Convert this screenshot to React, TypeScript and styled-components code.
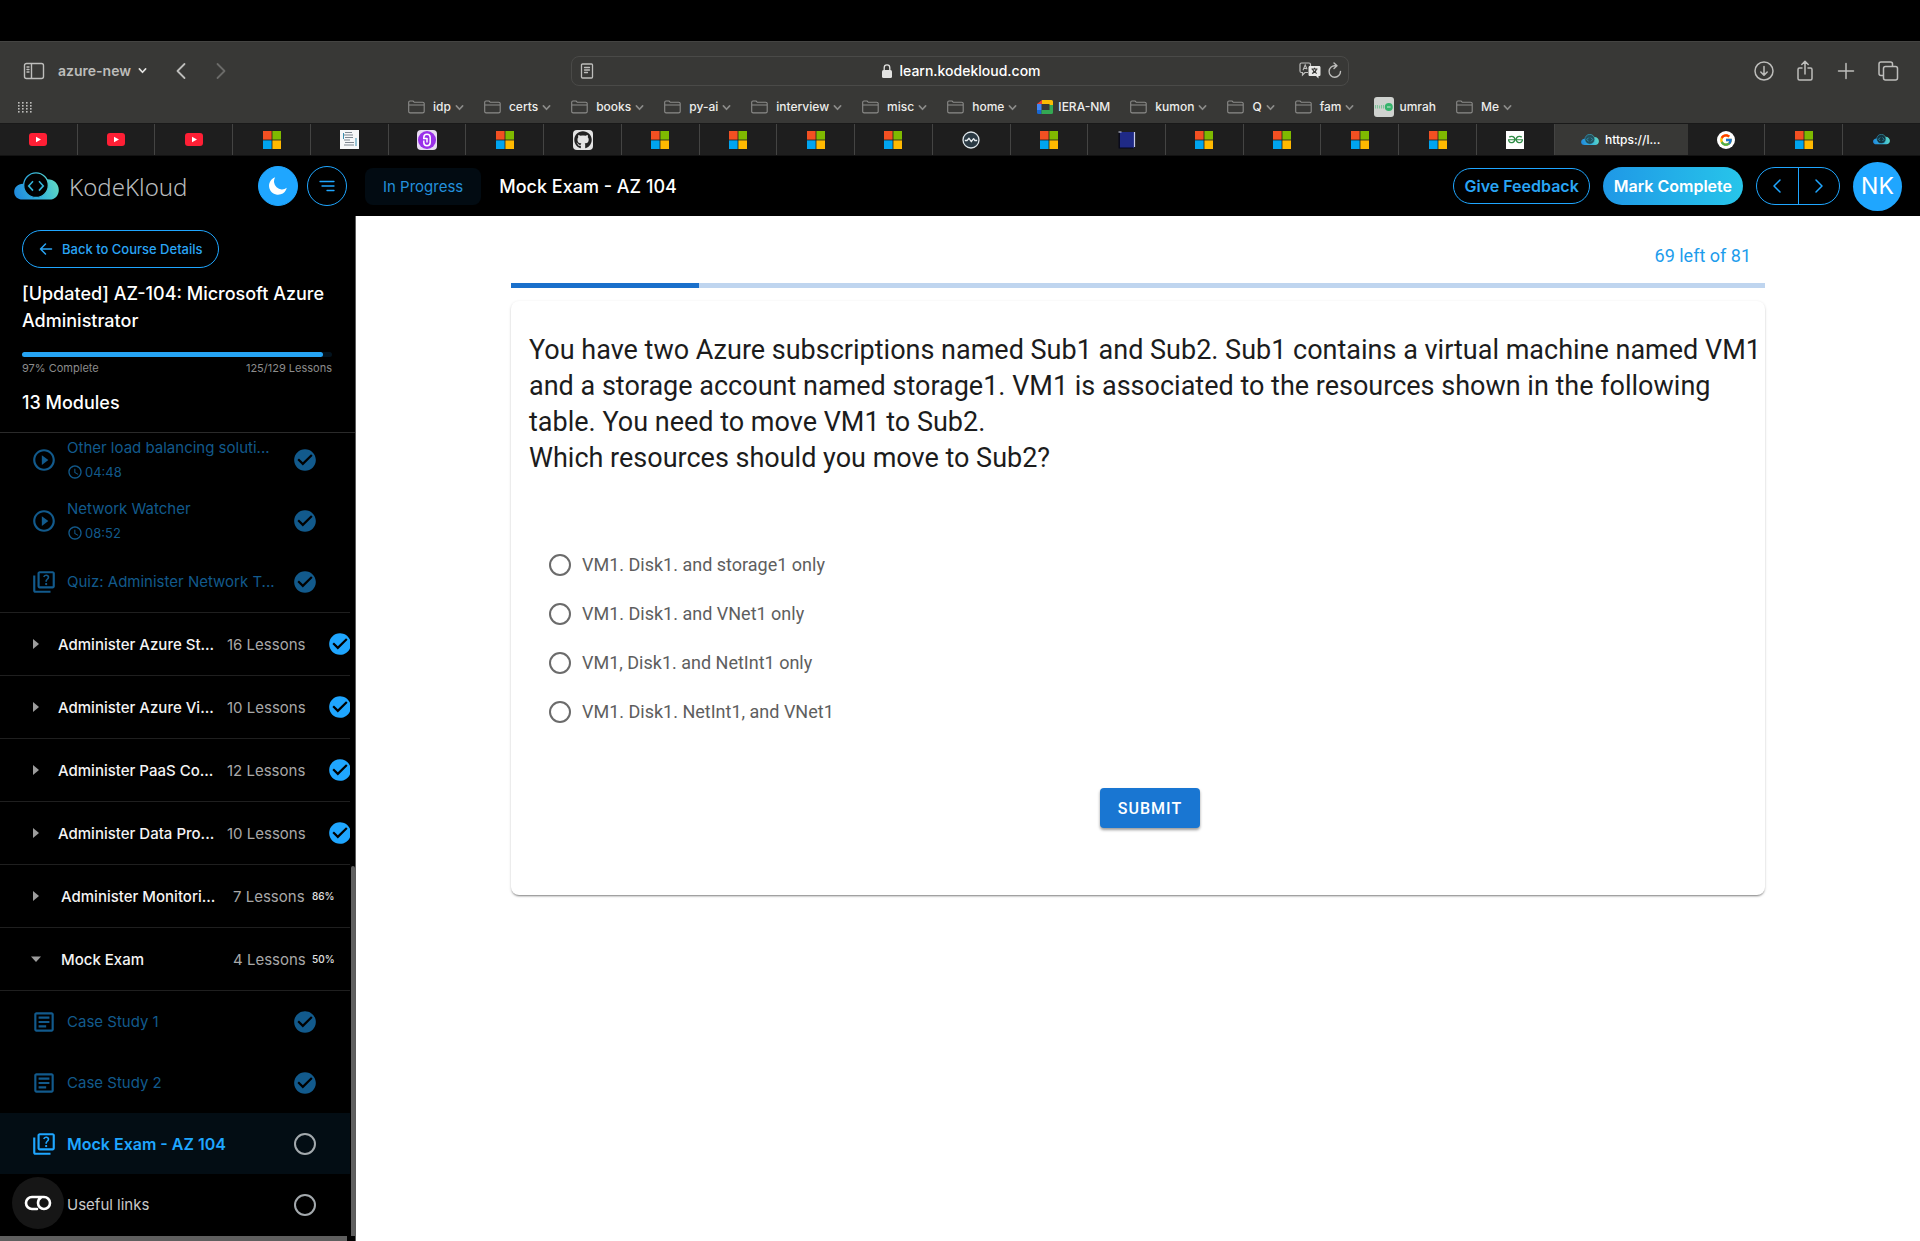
import React from "react";
import styled, { createGlobalStyle, css } from "styled-components";
import {
  MdAccessTime,
  MdCheckCircle,
  MdOutlineArticle,
  MdOutlineQuiz,
  MdPlayCircleOutline,
} from "react-icons/md";
import { FaGithub } from "react-icons/fa";
import { FcGoogle } from "react-icons/fc";
import { SiGeeksforgeeks } from "react-icons/si";

const UI_FONT = `Inter, "Liberation Sans", sans-serif`;
const QUIZ_FONT = `Roboto, "Liberation Sans", sans-serif`;
const BLUE = "#1fa6ff";

const GlobalStyle = createGlobalStyle`
  *, *::before, *::after { box-sizing: border-box; }
  body { margin: 0; background: #000; }
  button, input { font: inherit; color: inherit; }
  button { padding: 0; border: 0; background: none; cursor: pointer; }
  a { color: inherit; text-decoration: none; }
  h1, h2, p { margin: 0; }
  svg { display: block; flex: none; }
`;

const Screen = styled.div`
  display: flex;
  flex-direction: column;
  height: 100vh;
  padding-top: 41px;
  background: #000;
  font-family: ${UI_FONT};
  color: #fff;
`;

/* ---------- browser window ---------- */

const Browser = styled.header`
  flex: none;
  background: #383836;
  border-top: 1px solid #444442;
`;

const Toolbar = styled.div`
  display: grid;
  grid-template-columns: 1fr minmax(300px, 778px) 1fr;
  align-items: center;
  height: 57px;
  padding: 0 21px;
  color: #bdbdbb;
`;

const ToolGroup = styled.div<{ $end?: boolean; $gap: number }>`
  display: flex;
  align-items: center;
  justify-content: ${(p) => (p.$end ? "flex-end" : "flex-start")};
  gap: ${(p) => p.$gap}px;
`;

const ProfileButton = styled.button`
  display: flex;
  align-items: center;
  gap: 7px;
  margin-right: 16px;
  font-size: 14px;
  font-weight: 600;
`;

const ToolButton = styled.button<{ $faded?: boolean }>`
  display: flex;
  color: ${(p) => (p.$faded ? "#6b6b69" : "inherit")};
`;

const AddressBar = styled.div`
  display: flex;
  align-items: center;
  justify-content: space-between;
  height: 30px;
  padding: 0 6px 0 8px;
  border: 1px solid #4a4a48;
  border-radius: 8px;
`;

const Address = styled.label`
  display: flex;
  align-items: center;
  gap: 8px;
  padding-left: 34px;
  color: #e2e2e0;
`;

const AddressInput = styled.input`
  width: 146px;
  padding: 0;
  border: 0;
  outline: 0;
  background: none;
  font-size: 14px;
  font-weight: 500;
  color: #fff;
`;

const BookmarkBar = styled.nav`
  position: relative;
  display: flex;
  align-items: center;
  justify-content: center;
  gap: 20px;
  height: 24px;
  padding: 0 18px 8px;
`;

const AppsButton = styled.button`
  position: absolute;
  left: 18px;
  top: 3px;
  color: #bdbdbb;
`;

const Bookmark = styled.a<{ $site?: boolean }>`
  display: flex;
  align-items: center;
  gap: ${(p) => (p.$site ? 5 : 8)}px;
  height: 16px;
  font-size: 12px;
  font-weight: 500;
  line-height: 16px;
  color: #ededeb;
`;

const BookmarkText = styled.span`
  display: flex;
  align-items: center;
  gap: 4px;
`;

const TabStrip = styled.div`
  display: flex;
  height: 33px;
  border-top: 1px solid #191919;
  border-bottom: 1px solid #121212;
`;

const BrowserTab = styled.a<{ $active?: boolean }>`
  display: flex;
  align-items: center;
  justify-content: center;
  gap: 6px;
  flex: 1 1 0;
  border-right: 1px solid #444443;
  background: #1e1e1e;
  font-size: 12px;
  font-weight: 500;
  ${(p) =>
    p.$active &&
    css`
      flex: 0 0 133px;
      background: #383836;
      border-color: #383836;
    `}
  &:last-child {
    border-right: 0;
  }
`;

const IconTile = styled.span<{ $size: number; $round?: number; $ink?: string; $bg?: string }>`
  display: flex;
  align-items: center;
  justify-content: center;
  width: ${(p) => p.$size}px;
  height: ${(p) => p.$size}px;
  border-radius: ${(p) => p.$round ?? 0}px;
  background: ${(p) => p.$bg ?? "#fff"};
  color: ${(p) => p.$ink ?? "#222"};
`;

/* ---------- course header ---------- */

const CourseBar = styled.div`
  display: flex;
  flex: none;
  align-items: center;
  height: 60px;
  padding: 0 18px 0 14px;
`;

const Brand = styled.a`
  display: flex;
  align-items: center;
  gap: 10px;
  width: 244px;
  font-family: "Noto Sans", "Open Sans", sans-serif;
  font-size: 24px;
  font-weight: 300;
  color: #b9bcbe;
`;

const RoundButton = styled.button<{ $filled?: boolean }>`
  display: flex;
  align-items: center;
  justify-content: center;
  width: 40px;
  height: 40px;
  margin-right: 9px;
  border-radius: 50%;
  border: 1px solid ${BLUE};
  background: ${(p) => (p.$filled ? BLUE : "transparent")};
  color: ${(p) => (p.$filled ? "#fff" : BLUE)};
`;

const StatusChip = styled.span`
  display: flex;
  align-items: center;
  height: 37px;
  margin: 0 18px 0 9px;
  padding: 0 18px;
  border-radius: 8px;
  background: #020b12;
  font-size: 15px;
  color: #2390dd;
`;

const LessonTitle = styled.h1`
  flex: 1;
  font-size: 18px;
  font-weight: 500;
`;

const HeaderActions = styled.div`
  display: flex;
  align-items: center;
  gap: 13px;
`;

const PillButton = styled.button<{ $primary?: boolean }>`
  height: ${(p) => (p.$primary ? 38 : 36)}px;
  padding: 0 ${(p) => (p.$primary ? 11 : 10)}px;
  border: ${(p) => (p.$primary ? "0" : `1px solid ${BLUE}`)};
  border-radius: 19px;
  background: ${(p) => (p.$primary ? "linear-gradient(90deg, #1f98e6, #27c5ea)" : "transparent")};
  font-size: 16px;
  font-weight: 600;
  color: ${(p) => (p.$primary ? "#fff" : "#2aa5f5")};
  white-space: nowrap;
`;

const Pager = styled.div`
  display: flex;
  width: 84px;
  height: 38px;
  border: 1px solid ${BLUE};
  border-radius: 19px;
  color: ${BLUE};
`;

const PagerButton = styled.button`
  display: flex;
  flex: 1;
  align-items: center;
  justify-content: center;
  & + & {
    border-left: 1px solid ${BLUE};
  }
`;

const Avatar = styled.button`
  width: 49px;
  height: 49px;
  border-radius: 50%;
  background: ${BLUE};
  font-size: 23px;
  color: #fff;
`;

/* ---------- course sidebar ---------- */

const Body = styled.div`
  display: flex;
  flex: 1;
  min-height: 0;
`;

const Sidebar = styled.aside`
  position: relative;
  display: flex;
  flex: none;
  flex-direction: column;
  width: 356px;
  border-right: 1px solid #5c5c5c;
  background: #000;
`;

const CourseInfo = styled.div`
  flex: none;
  padding: 14px 23px 16px 22px;
  border-bottom: 1px solid #2a2a2a;
`;

const BackLink = styled.a`
  display: inline-flex;
  align-items: center;
  gap: 9px;
  height: 38px;
  padding: 0 15px 0 16px;
  border: 1px solid ${BLUE};
  border-radius: 19px;
  font-size: 13px;
  font-weight: 500;
  color: #2aa5f5;
`;

const CourseTitle = styled.h2`
  margin-top: 12px;
  font-size: 18px;
  font-weight: 500;
  line-height: 27px;
`;

const CourseTrack = styled.div`
  height: 5px;
  margin-top: 18px;
  border-radius: 3px;
  background: #03131e;
`;

const CourseFill = styled.div`
  height: 100%;
  border-radius: 3px;
  background: #25a4f4;
`;

const CourseStats = styled.div`
  display: flex;
  justify-content: space-between;
  margin-top: 4px;
  font-size: 11px;
  line-height: 14px;
  color: #8c8c8c;
`;

const ModuleCount = styled.p`
  margin-top: 15px;
  font-size: 18px;
  font-weight: 500;
  line-height: 26px;
`;

const ModuleList = styled.div`
  display: flex;
  flex: 1;
  flex-direction: column;
  justify-content: flex-end;
  min-height: 0;
  width: 350px;
  padding-bottom: 6px;
  overflow: hidden;
`;

const LessonRow = styled.a<{ $state: "done" | "current" | "open" }>`
  display: flex;
  flex: none;
  align-items: center;
  height: 61px;
  padding: 0 32px 0 31px;
  background: ${(p) => (p.$state === "current" ? "#030d14" : "transparent")};
  color: ${(p) => ({ done: "#125a8c", current: BLUE, open: "#c9c9c9" })[p.$state]};
  font-size: ${(p) => (p.$state === "current" ? 16 : 15)}px;
  font-weight: ${(p) => (p.$state === "current" ? 600 : 400)};
`;

const LessonText = styled.span<{ $indent?: boolean }>`
  display: flex;
  flex: 1;
  flex-direction: column;
  gap: 2px;
  padding-left: ${(p) => (p.$indent ? 36 : 10)}px;
  line-height: 22px;
  white-space: nowrap;
`;

const LessonTime = styled.span`
  display: flex;
  align-items: center;
  gap: 2px;
  font-size: 13px;
`;

const OpenMark = styled.span`
  width: 22px;
  height: 22px;
  margin: 0 2px;
  border: 2px solid #a3a9ad;
  border-radius: 50%;
`;

const ModuleRow = styled.button<{ $divided?: boolean }>`
  display: flex;
  flex: none;
  align-items: center;
  height: ${(p) => (p.$divided ? 64 : 63)}px;
  padding-left: 31px;
  border-top: 1px solid #1f1f1f;
  border-bottom: ${(p) => (p.$divided ? "1px solid #1f1f1f" : "0")};
  font-size: 15px;
  text-align: left;
  white-space: nowrap;
`;

const ModuleName = styled.span<{ $wide?: boolean }>`
  flex: none;
  width: ${(p) => (p.$wide ? 192 : 186)}px;
  padding-left: ${(p) => (p.$wide ? 20 : 17)}px;
  font-weight: 500;
  color: #f4f4f4;
`;

const ModuleLessons = styled.span<{ $wide?: boolean }>`
  flex: none;
  width: ${(p) => (p.$wide ? 79 : 100)}px;
  color: #a8a8a8;
`;

const ModulePercent = styled.span`
  font-size: 10px;
  font-weight: 500;
  color: #e0e0e0;
`;

const ScrollThumb = styled.div<{ $axis: "x" | "y" }>`
  position: absolute;
  background: #5f5f5f;
  ${(p) =>
    p.$axis === "y"
      ? css`
          right: 0;
          bottom: 5px;
          width: 4px;
          height: 370px;
          border-radius: 2px 2px 0 0;
        `
      : css`
          left: 0;
          bottom: 0;
          width: 347px;
          height: 5px;
        `}
`;

const WidgetButton = styled.button`
  position: absolute;
  left: 12px;
  bottom: 12px;
  display: flex;
  align-items: center;
  justify-content: center;
  width: 52px;
  height: 52px;
  border-radius: 50%;
  background: #161616;
  color: #fff;
`;

/* ---------- exam ---------- */

const Exam = styled.main`
  flex: 1;
  min-width: 0;
  padding: 27px 155px 0;
  background: #fff;
  font-family: ${QUIZ_FONT};
  overflow: auto;
`;

const Remaining = styled.p`
  padding-right: 14px;
  font-size: 18px;
  line-height: 26px;
  text-align: right;
  color: #1d9cec;
`;

const ExamTrack = styled.div`
  height: 5px;
  margin: 14px 0 13px;
  background: #bfd5ef;
`;

const ExamFill = styled.div`
  height: 100%;
  background: #1a70cb;
`;

const Card = styled.form`
  padding: 31px 4px 67px 18px;
  border-radius: 8px;
  background: #fff;
  box-shadow: 0 2px 2px -1px rgba(0, 0, 0, 0.4), 0 1px 3px rgba(0, 0, 0, 0.16);
`;

const Question = styled.p`
  font-size: 27px;
  line-height: 36px;
  color: #1c1c1c;
`;

const Answers = styled.fieldset`
  display: flex;
  flex-direction: column;
  margin: 64px 0 0;
  padding: 0 0 0 20px;
  border: 0;
`;

const Answer = styled.label`
  display: flex;
  align-items: center;
  gap: 11px;
  height: 49px;
  font-size: 18px;
  color: #5e5e5e;
`;

const Radio = styled.input`
  appearance: none;
  width: 22px;
  height: 22px;
  margin: 0;
  border: 2px solid #6b6b6b;
  border-radius: 50%;
  &:checked {
    border: 6px solid #1976d2;
  }
`;

const SubmitRow = styled.div`
  display: flex;
  justify-content: center;
  padding: 52px 0 0 10px;
`;

const SubmitButton = styled.button`
  height: 40px;
  padding: 0 18px;
  border-radius: 4px;
  background: #1976d2;
  box-shadow: 0 2px 3px rgba(0, 0, 0, 0.4);
  font-size: 16px;
  font-weight: 500;
  letter-spacing: 1px;
  color: #fff;
`;

/* ---------- drawings ---------- */

type Stroke = { d: string; w: number; h: number; sw?: number };
const StrokeIcon = ({ d, w, h, sw = 1.5 }: Stroke) => (
  <svg width={w} height={h} viewBox={`0 0 ${w} ${h}`} fill="none" stroke="currentColor" strokeWidth={sw} strokeLinecap="round" strokeLinejoin="round" aria-hidden>
    <path d={d} />
  </svg>
);

const Chevron = ({ color }: { color: string }) => (
  <svg width="9" height="9" viewBox="0 0 10 10" fill="none" stroke={color} strokeWidth="1.8" strokeLinecap="round" strokeLinejoin="round">
    <path d="M1.5 3.2 5 7l3.5-3.8" />
  </svg>
);

const FolderIcon = () => (
  <svg width="17" height="14" viewBox="0 0 17 14" fill="none" stroke="#8b8b89" strokeWidth="1.1" strokeLinejoin="round">
    <path d="M.7 11.6V2.2C.7 1.4 1.2 1 2 1h3l1.4 1.3h8.3c.9 0 1.5.5 1.5 1.3v8c0 .8-.6 1.3-1.5 1.3H2.1C1.2 12.9.7 12.4.7 11.6zM.8 5h15.4" />
  </svg>
);

const Windows = () => (
  <svg width="18" height="18" viewBox="0 0 18 18">
    <path fill="#f25022" d="M0 0h8.6v8.6H0z" />
    <path fill="#7fba00" d="M9.4 0H18v8.6H9.4z" />
    <path fill="#00a4ef" d="M0 9.4h8.6V18H0z" />
    <path fill="#ffb900" d="M9.4 9.4H18V18H9.4z" />
  </svg>
);

const Youtube = () => (
  <svg width="18" height="13" viewBox="0 0 18 13">
    <rect width="18" height="13" rx="3" fill="#ff1f35" />
    <path d="M7 3.800v5.400l5-2.700z" fill="#fff" />
  </svg>
);

const DocIcon = () => (
  <svg width="19" height="19" viewBox="0 0 19 19">
    <rect width="19" height="19" fill="#f6f8f9" />
    <path d="M5 2.5h7M4 5h9M5 7.5h8M4 10h6M5 12.5h9M4 15h10" stroke="#7d8790" strokeWidth="1" />
    <path d="M16 8v8M3.5 3v6" stroke="#3a8fb0" strokeWidth="1" />
  </svg>
);

const UdemyIcon = () => (
  <svg width="20" height="20" viewBox="0 0 20 20">
    <rect width="20" height="20" rx="4" fill="#e8dcf2" />
    <circle cx="10" cy="10" r="9" fill="#9a30ea" />
    <path d="M6.800 8.500V7.500a3.200 3.200 0 0 1 6.400 0V12.500a3.200 3.200 0 0 1-6.400 0V10.500M6 8.600h3.800M10 8v4.500" fill="none" stroke="#fff" strokeWidth="1.500" />
  </svg>
);

const WaveIcon = () => (
  <svg width="18" height="18" viewBox="0 0 18 18" fill="none">
    <circle cx="9" cy="9" r="8" fill="#2b3a44" stroke="#dfe6ea" strokeWidth="1.300" />
    <path d="M2.800 9.500h2.200l2-2.200 2.300 3.400 2.300-3 1.300 1.800h2.300" stroke="#e9eef0" strokeWidth="1.300" strokeLinejoin="round" />
  </svg>
);

const NavyIcon = () => (
  <svg width="18" height="18" viewBox="0 0 18 18">
    <path fill="#1f2a86" d="M2 1h14v16H2z" />
    <path d="M.5 1h3M16.500 1v15" stroke="#c9cdea" strokeWidth="1.200" />
    <path d="M1.200 2v15h14" stroke="#05071c" strokeWidth="1.200" fill="none" />
  </svg>
);

const CloudLogo = ({ width, id, core = "#000" }: { width: number; id: string; core?: string }) => (
  <svg width={width} height={(width * 28) / 45} viewBox="0 0 45 28">
    <defs>
      <linearGradient id={id} gradientUnits="userSpaceOnUse" x1="0" y1="26" x2="45" y2="8">
        <stop offset="0" stopColor="#1e86dd" />
        <stop offset=".55" stopColor="#37b8dc" />
        <stop offset="1" stopColor="#64dcc0" />
      </linearGradient>
    </defs>
    <path fill={`url(#${id})`} d="M8.500 27.500C3.600 27.500.2 24.200.2 19.900c0-4.500 3.500-7.900 8.800-8.100L33 7.300c6.700-.3 11.800 4.600 11.800 10.600 0 5.600-3.900 9.600-9.300 9.600z" />
    <circle cx="22" cy="13.200" r="12.300" fill={core} stroke={`url(#${id})`} strokeWidth="1.300" />
    <path d="m19 9.200-4.300 4.700 4.300 4.700M25 9.200l4.300 4.700-4.300 4.700" fill="none" stroke="#33b4d8" strokeWidth="1.600" />
  </svg>
);

const MeetIcon = () => (
  <svg width="16" height="16" viewBox="0 0 16 16">
    <path fill="#ea4335" d="M0 5 5 1v4z" />
    <path fill="#4285f4" d="M0 5h4.500v6H0z" />
    <path fill="#1967d2" d="M0 11h4.500v4H1.500A1.500 1.500 0 0 1 0 13.500z" />
    <path fill="#fbbc04" d="M5 1h9.500A1.500 1.500 0 0 1 16 2.500V6h-3.500V5H5z" />
    <path fill="#34a853" d="M4.500 11h8V6H16v7.500a1.500 1.500 0 0 1-1.500 1.500h-10z" />
  </svg>
);

const UmrahIcon = () => (
  <svg width="20" height="20" viewBox="0 0 20 20">
    <rect width="20" height="20" rx="3" fill="#cfd2cf" />
    <path d="M1.500 8v3.500M3.500 8v3.500M5.500 8.500v3M7.500 8v3.500M9.500 8v3.500" stroke="#7fc49a" strokeWidth="1.100" />
    <circle cx="14.800" cy="10" r="4" fill="#35b36b" />
    <path d="M13 10h3.600" stroke="#cfe8d8" strokeWidth="1" />
  </svg>
);

const TranslateIcon = () => (
  <svg width="22" height="17" viewBox="0 0 22 17">
    <path d="M9 10.500H6L3.500 13v-2.500H2.500C1.500 10.500 1 10 1 9V2.500C1 1.500 1.500 1 2.500 1H10c1 0 1.500.5 1.500 1.500V4" fill="none" stroke="currentColor" strokeWidth="1.200" />
    <path d="m4 8.200 2.200-5.200 1.800 4.200M4.800 6.500h3" fill="none" stroke="currentColor" strokeWidth="1.100" />
    <path d="M11 4h9c1 0 1.500.6 1.500 1.500v7c0 1-.5 1.500-1.500 1.500h-.5v2.500L17 14h-6c-1 0-1.500-.5-1.500-1.500v-7C9.500 4.600 10 4 11 4z" fill="#e8e8e6" />
    <path d="M12.500 7h6M15.500 5.800V7m2 0c-.6 2-2.400 3.800-4.500 4.500M13.500 7.200c.8 2 2.200 3.500 4.300 4.200" fill="none" stroke="#383836" strokeWidth="1.100" />
  </svg>
);

const Moon = () => (
  <svg width="20" height="20" viewBox="0 0 20 20" fill="currentColor">
    <path d="M7.200 1.200A8 8 0 0 0 18.800 11.800 9 9 0 1 1 7.200 1.200z" />
  </svg>
);

const Caret = ({ open }: { open?: boolean }) => (
  <svg width="10" height="10" viewBox="0 0 10 10" fill="#9c9c9c">
    <path d={open ? "M0 2.500h10L5 8z" : "M2 0v10l6-5z"} />
  </svg>
);

/* ---------- data ---------- */

const bookmarks = [
  "idp", "certs", "books", "py-ai", "interview", "misc", "home", "IERA-NM", "kumon", "Q", "fam", "umrah", "Me",
];

const tabIcons = [
  "youtube", "youtube", "youtube", "windows", "doc", "udemy", "windows", "github", "windows", "windows", "windows",
  "windows", "wave", "windows", "navy", "windows", "windows", "windows", "windows", "gfg", "current", "google",
  "windows", "kodekloud",
];

const icons: Record<string, React.ReactNode> = {
  youtube: <Youtube />,
  windows: <Windows />,
  doc: <DocIcon />,
  udemy: <UdemyIcon />,
  github: <IconTile $size={20} $round={4} $bg="#e4e4e4"><FaGithub size={18} /></IconTile>,
  wave: <WaveIcon />,
  navy: <NavyIcon />,
  gfg: <IconTile $size={18} $ink="#2f8d46"><SiGeeksforgeeks size={15} /></IconTile>,
  google: <IconTile $size={18} $round={9}><FcGoogle size={14} /></IconTile>,
  kodekloud: <CloudLogo width={17} id="cloud-tab" core="#14343f" />,
};

const topLessons = [
  { title: "Other load balancing soluti...", time: "04:48" },
  { title: "Network Watcher", time: "08:52" },
  { title: "Quiz: Administer Network T..." },
];

const modules = [
  { name: "Administer Azure St...", lessons: "16 Lessons" },
  { name: "Administer Azure Vi...", lessons: "10 Lessons" },
  { name: "Administer PaaS Co...", lessons: "12 Lessons" },
  { name: "Administer Data Pro...", lessons: "10 Lessons" },
  { name: "Administer Monitori...", lessons: "7 Lessons", percent: "86%" },
  { name: "Mock Exam", lessons: "4 Lessons", percent: "50%", open: true },
];

const answers = [
  "VM1. Disk1. and storage1 only",
  "VM1. Disk1. and VNet1 only",
  "VM1, Disk1. and NetInt1 only",
  "VM1. Disk1. NetInt1, and VNet1",
];

const BrowserChrome = () => (
  <Browser>
    <Toolbar>
      <ToolGroup $gap={12}>
        <ToolButton aria-label="Show sidebar">
          <StrokeIcon w={25} h={18} sw={1.4} d="M5.500 1.500h15a2 2 0 0 1 2 2v11a2 2 0 0 1-2 2h-15a2 2 0 0 1-2-2v-11a2 2 0 0 1 2-2zM10.500 1.500v15M6 5h2M6 7.500h2M6 10h2" />
        </ToolButton>
        <ProfileButton>
          azure-new
          <Chevron color="#e2e2e0" />
        </ProfileButton>
        <ToolGroup $gap={28}>
          <ToolButton aria-label="Back">
            <StrokeIcon w={12} h={18} sw={1.8} d="M9.500 2 2.500 9l7 7" />
          </ToolButton>
          <ToolButton aria-label="Forward" $faded>
            <StrokeIcon w={12} h={18} sw={1.8} d="m2.500 2 7 7-7 7" />
          </ToolButton>
        </ToolGroup>
      </ToolGroup>
      <AddressBar>
        <ToolButton aria-label="Reader">
          <StrokeIcon w={14} h={16} sw={1.3} d="M2.500 1h9a1 1 0 0 1 1 1v12a1 1 0 0 1-1 1h-9a1 1 0 0 1-1-1V2a1 1 0 0 1 1-1zM4.500 4.500h5M4.500 7h5M4.500 9.500h3" />
        </ToolButton>
        <Address>
          <svg width="10" height="14" viewBox="0 0 10 14" aria-hidden>
            <rect y="6" width="10" height="8" rx="1.500" fill="currentColor" />
            <path d="M2.200 6V3.700a2.800 2.800 0 0 1 5.600 0V6" fill="none" stroke="currentColor" strokeWidth="1.300" />
          </svg>
          <AddressInput aria-label="Address" defaultValue="learn.kodekloud.com" />
        </Address>
        <ToolGroup $gap={7}>
          <ToolButton aria-label="Translate"><TranslateIcon /></ToolButton>
          <ToolButton aria-label="Reload">
            <StrokeIcon w={14} h={17} sw={1.4} d="M12.500 9.500A5.700 5.700 0 1 1 7 3.800h1.500M6 1l3 2.800-3 2.800" />
          </ToolButton>
        </ToolGroup>
      </AddressBar>
      <ToolGroup $gap={21} $end>
        <ToolButton aria-label="Downloads">
          <StrokeIcon w={20} h={20} d="M19 10a9 9 0 1 1-18 0 9 9 0 0 1 18 0zM10 5.500v8.500M6.800 11l3.200 3.200 3.200-3.200" />
        </ToolButton>
        <ToolButton aria-label="Share">
          <StrokeIcon w={20} h={22} d="M7 8H4.500A1.500 1.500 0 0 0 3 9.500v9A1.500 1.500 0 0 0 4.500 20h11a1.500 1.500 0 0 0 1.500-1.500v-9A1.500 1.500 0 0 0 15.500 8H13M10 14V1.500M6.800 4.500 10 1.300l3.200 3.200" />
        </ToolButton>
        <ToolButton aria-label="New tab">
          <StrokeIcon w={20} h={20} d="M10 2.500v15M2.500 10h15" />
        </ToolButton>
        <ToolButton aria-label="Tab overview">
          <StrokeIcon w={22} h={20} d="M8.500 5.500h10a2 2 0 0 1 2 2v9.500a2 2 0 0 1-2 2h-10a2 2 0 0 1-2-2V7.500a2 2 0 0 1 2-2zM6.300 14.500H4a2 2 0 0 1-2-2V3a2 2 0 0 1 2-2h9.500a2 2 0 0 1 2 2v2.300" />
        </ToolButton>
      </ToolGroup>
    </Toolbar>
    <BookmarkBar aria-label="Bookmarks">
      <AppsButton aria-label="Show bookmarks">
        <svg width="14" height="11" viewBox="0 0 14 11" fill="currentColor">
          {[1, 4, 7, 10].flatMap((y) => [1, 5, 9, 13].map((x) => <rect key={`${x}-${y}`} x={x - 1} y={y - 1} width="1.600" height="1.600" />))}
        </svg>
      </AppsButton>
      {bookmarks.map((name) => {
        const site = name === "IERA-NM" || name === "umrah";
        return (
          <Bookmark key={name} href="#" $site={site}>
            {name === "IERA-NM" ? <MeetIcon /> : name === "umrah" ? <UmrahIcon /> : <FolderIcon />}
            <BookmarkText>
              {name}
              {!site && <Chevron color="#8b8b89" />}
            </BookmarkText>
          </Bookmark>
        );
      })}
    </BookmarkBar>
    <TabStrip>
      {tabIcons.map((name, i) => (
        <BrowserTab key={i} href="#" $active={name === "current"} aria-label={name}>
          {name === "current" ? (
            <>
              <CloudLogo width={18} id="cloud-current" core="#24505c" />
              https://l...
            </>
          ) : (
            icons[name]
          )}
        </BrowserTab>
      ))}
    </TabStrip>
  </Browser>
);

const CourseHeader = () => (
  <CourseBar>
    <Brand href="#">
      <CloudLogo width={45} id="cloud-brand" />
      KodeKloud
    </Brand>
    <RoundButton $filled aria-label="Dark mode"><Moon /></RoundButton>
    <RoundButton aria-label="Toggle menu">
      <StrokeIcon w={16} h={12} sw={1.3} d="M1 1.500h14M3 6h12M8 10.500h7" />
    </RoundButton>
    <StatusChip>In Progress</StatusChip>
    <LessonTitle>Mock Exam - AZ 104</LessonTitle>
    <HeaderActions>
      <PillButton>Give Feedback</PillButton>
      <PillButton $primary>Mark Complete</PillButton>
      <Pager>
        <PagerButton aria-label="Previous lesson">
          <StrokeIcon w={10} h={16} d="M8 2 2 8l6 6" />
        </PagerButton>
        <PagerButton aria-label="Next lesson">
          <StrokeIcon w={10} h={16} d="m2 2 6 6-6 6" />
        </PagerButton>
      </Pager>
      <Avatar>NK</Avatar>
    </HeaderActions>
  </CourseBar>
);

const CourseSidebar = () => (
  <Sidebar>
    <CourseInfo>
      <BackLink href="#">
        <StrokeIcon w={14} h={14} d="M12.500 7h-11M6.500 2l-5 5 5 5" />
        Back to Course Details
      </BackLink>
      <CourseTitle>[Updated] AZ-104: Microsoft Azure Administrator</CourseTitle>
      <CourseTrack role="progressbar" aria-label="Course progress" aria-valuenow={97}>
        <CourseFill style={{ width: "97%" }} />
      </CourseTrack>
      <CourseStats>
        <span>97% Complete</span>
        <span>125/129 Lessons</span>
      </CourseStats>
      <ModuleCount>13 Modules</ModuleCount>
    </CourseInfo>
    <ModuleList>
      {topLessons.map((l) => (
        <LessonRow key={l.title} href="#" $state="done">
          {l.time ? <MdPlayCircleOutline size={26} /> : <MdOutlineQuiz size={26} />}
          <LessonText>
            {l.title}
            {l.time && (
              <LessonTime>
                <MdAccessTime size={16} />
                {l.time}
              </LessonTime>
            )}
          </LessonText>
          <MdCheckCircle size={26} />
        </LessonRow>
      ))}
      {modules.map((m) => (
        <ModuleRow key={m.name} $divided={m.open} aria-expanded={!!m.open}>
          <Caret open={m.open} />
          <ModuleName $wide={!!m.percent}>{m.name}</ModuleName>
          <ModuleLessons $wide={!!m.percent}>{m.lessons}</ModuleLessons>
          {m.percent ? <ModulePercent>{m.percent}</ModulePercent> : <MdCheckCircle size={26} color={BLUE} />}
        </ModuleRow>
      ))}
      {["Case Study 1", "Case Study 2"].map((t) => (
        <LessonRow key={t} href="#" $state="done">
          <MdOutlineArticle size={26} />
          <LessonText>{t}</LessonText>
          <MdCheckCircle size={26} />
        </LessonRow>
      ))}
      <LessonRow href="#" $state="current">
        <MdOutlineQuiz size={26} />
        <LessonText>Mock Exam - AZ 104</LessonText>
        <OpenMark />
      </LessonRow>
      <LessonRow href="#" $state="open">
        <LessonText $indent>Useful links</LessonText>
        <OpenMark />
      </LessonRow>
    </ModuleList>
    <ScrollThumb $axis="y" />
    <ScrollThumb $axis="x" />
    <WidgetButton aria-label="Open widget">
      <StrokeIcon w={28} h={16} sw={2.6} d="M13 14H8A6 6 0 0 1 8 2h12a6 6 0 1 1-6 6c0-2.500 1.200-4.500 3-5.400" />
    </WidgetButton>
  </Sidebar>
);

const ExamPanel = () => (
  <Exam>
    <Remaining>69 left of 81</Remaining>
    <ExamTrack role="progressbar" aria-label="Exam progress" aria-valuenow={15}>
      <ExamFill style={{ width: "15%" }} />
    </ExamTrack>
    <Card onSubmit={(e) => e.preventDefault()}>
      <Question>
        You have two Azure subscriptions named Sub1 and Sub2. Sub1 contains a virtual machine named VM1 and a storage
        account named storage1. VM1 is associated to the resources shown in the following table. You need to move VM1 to
        Sub2.
        <br />
        Which resources should you move to Sub2?
      </Question>
      <Answers aria-label="Answers">
        {answers.map((a) => (
          <Answer key={a}>
            <Radio type="radio" name="answer" value={a} />
            {a}
          </Answer>
        ))}
      </Answers>
      <SubmitRow>
        <SubmitButton type="submit">SUBMIT</SubmitButton>
      </SubmitRow>
    </Card>
  </Exam>
);

export default function App() {
  return (
    <Screen>
      <GlobalStyle />
      <BrowserChrome />
      <CourseHeader />
      <Body>
        <CourseSidebar />
        <ExamPanel />
      </Body>
    </Screen>
  );
}
